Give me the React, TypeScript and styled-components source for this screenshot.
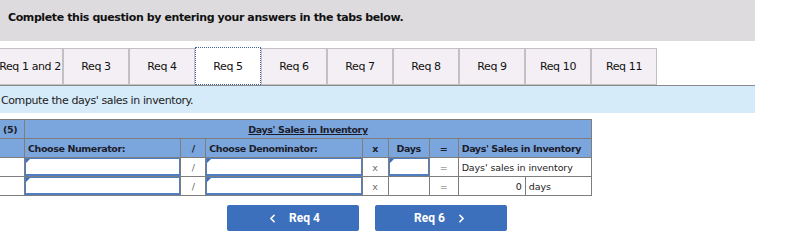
import React, { useState } from 'react';
import styled, { createGlobalStyle } from 'styled-components';
import { ChevronLeft, ChevronRight } from 'lucide-react';

const GlobalStyle = createGlobalStyle`
  body {
    margin: 0;
    background: #fff;
    font-family: "DejaVu Sans", Verdana, sans-serif;
    font-size: 11px;
    letter-spacing: -0.4px;
    color: #1a1a1a;
  }
`;

const tabs = ['Req 1 and 2', 'Req 3', 'Req 4', 'Req 5', 'Req 6', 'Req 7', 'Req 8', 'Req 9', 'Req 10', 'Req 11'];

function App() {
  const [active, setActive] = useState('Req 5');

  return (
    <Page>
      <GlobalStyle />
      <Banner>Complete this question by entering your answers in the tabs below.</Banner>

      <TabStrip>
        {tabs.map((tab) => (
          <Tab key={tab} $active={tab === active} onClick={() => setActive(tab)}>
            {tab}
          </Tab>
        ))}
      </TabStrip>

      <Prompt>Compute the days' sales in inventory.</Prompt>

      <Grid>
        <colgroup>
          <col style={{ width: 25 }} />
          <col style={{ width: 156 }} />
          <col style={{ width: 25 }} />
          <col style={{ width: 156 }} />
          <col style={{ width: 26 }} />
          <col style={{ width: 41 }} />
          <col style={{ width: 29 }} />
          <col style={{ width: 67 }} />
          <col style={{ width: 66 }} />
        </colgroup>
        <tbody>
          <tr>
            <HeadCell>(5)</HeadCell>
            <HeadCell colSpan={8} $align="center">
              <Title>Days' Sales in Inventory</Title>
            </HeadCell>
          </tr>
          <tr>
            <HeadCell />
            <HeadCell>Choose Numerator:</HeadCell>
            <HeadCell $align="center">/</HeadCell>
            <HeadCell>Choose Denominator:</HeadCell>
            <HeadCell $align="center">x</HeadCell>
            <HeadCell $align="center">Days</HeadCell>
            <HeadCell $align="center">=</HeadCell>
            <HeadCell colSpan={2}>Days' Sales in Inventory</HeadCell>
          </tr>
          <tr>
            <Cell />
            <Cell $pad={0}><Picker /></Cell>
            <Cell $align="center" $muted>/</Cell>
            <Cell $pad={0}><Picker /></Cell>
            <Cell $align="center" $muted>x</Cell>
            <Cell $pad={0}><Picker /></Cell>
            <Cell $align="center" $muted>=</Cell>
            <Cell colSpan={2}>Days' sales in inventory</Cell>
          </tr>
          <tr>
            <Cell />
            <Cell $pad={0}><Picker /></Cell>
            <Cell $align="center" $muted>/</Cell>
            <Cell $pad={0}><Picker /></Cell>
            <Cell $align="center" $muted>x</Cell>
            <Cell />
            <Cell $align="center" $muted>=</Cell>
            <Cell $align="right">0</Cell>
            <Cell>days</Cell>
          </tr>
        </tbody>
      </Grid>

      <Nav>
        <NavButton>
          <ChevronLeft size={13} strokeWidth={3} />
          <span>Req 4</span>
        </NavButton>
        <NavButton>
          <span>Req 6</span>
          <ChevronRight size={13} strokeWidth={3} />
        </NavButton>
      </Nav>
    </Page>
  );
}

export default App;

const Page = styled.div`
  width: 809px;
  height: 245px;
  overflow: hidden;
`;

const Banner = styled.div`
  width: 755px;
  height: 41px;
  box-sizing: border-box;
  padding: 11px 0 0 8px;
  background: #dddbdd;
  font-weight: bold;
  color: #111;
`;

const TabStrip = styled.div`
  display: flex;
  width: 758px;
  height: 37px;
  margin: 7px 0 0 -3px;
  border-bottom: 1px solid #8a8a8a;
`;

const Tab = styled.div<{ $active: boolean }>`
  width: 66px;
  box-sizing: border-box;
  display: flex;
  align-items: center;
  justify-content: center;
  white-space: nowrap;
  cursor: pointer;
  color: #111;
  background: ${(p) => (p.$active ? '#fff' : '#f4eff4')};
  border: ${(p) => (p.$active ? '1px dotted #3b5f9a' : '1px solid #c3c0c3')};
  height: ${(p) => (p.$active ? '38px' : '37px')};
  margin-top: ${(p) => (p.$active ? '-1px' : '0')};
  padding-top: ${(p) => (p.$active ? '1px' : '0')};
`;

const Prompt = styled.div`
  width: 755px;
  height: 27px;
  box-sizing: border-box;
  padding: 8px 0 0 1px;
  background: #d6ebf9;
  color: #222;
`;

const Grid = styled.table`
  margin: 6px 0 0 -1px;
  border-collapse: collapse;
  table-layout: fixed;
  width: 593px;
  font-size: 9.5px;
`;

const HeadCell = styled.td<{ $align?: string }>`
  height: 18px;
  padding: 0 3px;
  border: 1px solid #7d7d7d;
  background: #7ba6dd;
  font-weight: bold;
  letter-spacing: -0.4px;
  color: #1c1c2a;
  text-align: ${(p) => p.$align || 'left'};
  white-space: nowrap;
  overflow: hidden;
`;

const Title = styled.span`
  text-decoration: underline;
`;

const Cell = styled.td<{ $align?: string; $muted?: boolean; $pad?: number }>`
  height: 18px;
  padding: ${(p) => (p.$pad === 0 ? '0' : '0 3px')};
  border: 1px solid #7d7d7d;
  background: #fff;
  letter-spacing: -0.1px;
  color: ${(p) => (p.$muted ? '#6d6d6d' : '#1c1c1c')};
  text-align: ${(p) => p.$align || 'left'};
  white-space: nowrap;
  overflow: hidden;
`;

const Picker = styled.div`
  position: relative;
  height: 18px;
  box-sizing: border-box;
  border: 1px solid #4f7fc2;
  border-bottom-width: 2px;
  background: #fff;
  &::before {
    content: '';
    position: absolute;
    left: 0;
    top: 0;
    border-top: 4px solid #3d6fb8;
    border-right: 4px solid transparent;
  }
`;

const Nav = styled.div`
  display: flex;
  gap: 16px;
  margin: 9px 0 0 227px;
`;

const NavButton = styled.button`
  width: 132px;
  height: 26px;
  display: flex;
  align-items: center;
  justify-content: center;
  gap: 10px;
  border: none;
  border-radius: 2px;
  background: #3c70bd;
  color: #fff;
  font-family: Roboto, "Liberation Sans", sans-serif;
  font-weight: bold;
  font-size: 12px;
  letter-spacing: 0;
  cursor: pointer;
`;
